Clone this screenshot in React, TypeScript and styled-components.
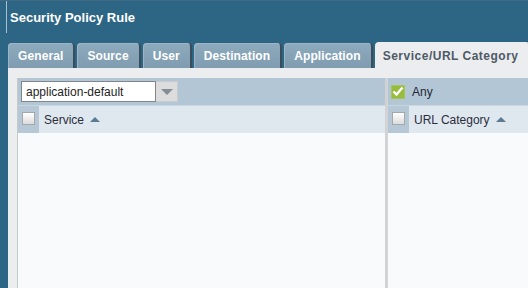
import styled, { createGlobalStyle } from 'styled-components';

const GlobalStyle = createGlobalStyle`
  html, body {
    margin: 0;
    padding: 0;
    background: #2d6685;
  }

  body {
    font-family: "Liberation Sans", Arial, sans-serif;
  }
`;

const tabs = ['General', 'Source', 'User', 'Destination', 'Application', 'Service/URL Category'];

export default function App() {
  return (
    <>
      <GlobalStyle />
      <S.Window>
        <S.TitleBar>
          <S.Title>Security Policy Rule</S.Title>
        </S.TitleBar>
        <S.TabRow>
          {tabs.map((tab) => (
            <S.Tab key={tab} $active={tab === 'Service/URL Category'}>
              {tab}
            </S.Tab>
          ))}
        </S.TabRow>
        <S.Content>
          <S.Panel $width={367} $left>
            <S.PanelBar>
              <S.Select>
                <S.SelectValue>application-default</S.SelectValue>
                <S.SelectButton>
                  <S.DownArrow />
                </S.SelectButton>
              </S.Select>
            </S.PanelBar>
            <S.ColumnHeader>
              <S.CheckCell>
                <S.CheckBox />
              </S.CheckCell>
              <S.ColumnLabel>
                Service
                <S.SortArrow />
              </S.ColumnLabel>
            </S.ColumnHeader>
            <S.Body />
          </S.Panel>
          <S.Panel>
            <S.PanelBar>
              <S.GreenCheck>
                <svg width="12" height="11" viewBox="0 0 12 11">
                  <path d="M1.5 5.5 L4.5 8.5 L10.5 1.5" stroke="#fff" strokeWidth="2.4" fill="none" />
                </svg>
              </S.GreenCheck>
              <S.BarLabel>Any</S.BarLabel>
            </S.PanelBar>
            <S.ColumnHeader>
              <S.CheckCell>
                <S.CheckBox />
              </S.CheckCell>
              <S.ColumnLabel>
                URL Category
                <S.SortArrow />
              </S.ColumnLabel>
            </S.ColumnHeader>
            <S.Body />
          </S.Panel>
        </S.Content>
      </S.Window>
    </>
  );
}

const Window = styled.div`
  width: 528px;
  height: 288px;
  overflow: hidden;

  display: flex;
  flex-direction: column;

  background: #2d6685;
  border-top: 1px solid #3f6a82;
  box-sizing: border-box;
`;

const TitleBar = styled.div`
  height: 32px;

  display: flex;
  align-items: center;

  margin-left: 6px;
  padding-left: 3px;

  border-left: 1px solid #a8c0cf;
`;

const Title = styled.div`
  font-size: 13px;
  font-weight: bold;
  color: #ffffff;
`;

const TabRow = styled.div`
  height: 26px;

  display: flex;
  align-items: flex-end;
  gap: 2px;

  margin-top: 9px;
  padding-left: 8px;
`;

const Tab = styled.div<{ $active?: boolean }>`
  height: ${({ $active }) => ($active ? '26px' : '25px')};

  display: flex;
  align-items: center;
  box-sizing: border-box;

  padding: ${({ $active }) => ($active ? '1px 9px 0 8px' : '1px 10px 0')};

  font-size: 12px;
  font-weight: bold;
  letter-spacing: ${({ $active }) => ($active ? '0.5px' : '0.1px')};
  white-space: nowrap;
  color: ${({ $active }) => ($active ? '#4e5a66' : '#ffffff')};

  background: ${({ $active }) => ($active ? '#ebedef' : 'linear-gradient(#8eaabd, #7f9cb0)')};
  border-radius: 4px 4px 0 0;
  border-right: 2px solid ${({ $active }) => ($active ? '#c9d2d9' : '#3a4d5a')};
  box-shadow: ${({ $active }) => ($active ? 'none' : 'inset 1px 1px 0 #9db5c6')};
`;

const Content = styled.div`
  flex: 1;

  display: flex;

  margin-left: 8px;
  padding: 10px 0 0 9px;

  background: #ebedef;
`;

const Panel = styled.div<{ $width?: number; $left?: boolean }>`
  ${({ $width }) => ($width ? `width: ${$width}px;` : 'flex: 1;')}
  flex-shrink: 0;

  display: flex;
  flex-direction: column;

  border-left: 1px solid ${({ $left }) => ($left ? '#c6cacd' : '#d2d4d6')};
  border-right: ${({ $left }) => ($left ? '2px solid #d0d2d4' : 'none')};
`;

const PanelBar = styled.div`
  height: 27px;

  display: flex;
  align-items: center;
  gap: 7px;

  padding-left: 3px;
  box-sizing: border-box;

  background: #b3c6d5;
`;

const Select = styled.div`
  height: 21px;

  display: flex;
`;

const SelectValue = styled.div`
  width: 135px;

  display: flex;
  align-items: center;
  box-sizing: border-box;

  padding-left: 4px;

  font-size: 12px;
  color: #1e1e1e;

  background: #ffffff;
  border: 1px solid #80868c;
`;

const SelectButton = styled.div`
  width: 21px;

  display: flex;
  align-items: center;
  justify-content: center;

  background: #dcdcdc;
  border: 1px solid #c8ccd0;
  border-left: none;
`;

const DownArrow = styled.div`
  width: 0;
  height: 0;

  border-left: 6px solid transparent;
  border-right: 6px solid transparent;
  border-top: 6px solid #868c93;
`;

const GreenCheck = styled.div`
  width: 14px;
  height: 14px;

  display: flex;
  align-items: center;
  justify-content: center;

  background: #97bd3c;
  border: 1px solid #a8c45f;
  box-sizing: border-box;
`;

const BarLabel = styled.div`
  font-size: 12px;
  color: #23263a;
`;

const ColumnHeader = styled.div`
  height: 27px;

  display: flex;

  background: #dfe8ef;
  border-top: 1px solid #c8d6e1;
`;

const CheckCell = styled.div`
  width: 21px;

  display: flex;
  justify-content: center;
  padding-top: 6px;
  box-sizing: border-box;

  background: #b6c8d6;
`;

const CheckBox = styled.div`
  width: 13px;
  height: 13px;

  background: linear-gradient(#ffffff, #dcdcdc);
  border: 1px solid #a3a8ad;
  box-sizing: border-box;
`;

const ColumnLabel = styled.div`
  display: flex;
  align-items: center;
  gap: 6px;

  padding-left: 5px;

  font-size: 12px;
  color: #2b2d3c;
`;

const SortArrow = styled.div`
  width: 0;
  height: 0;

  border-left: 5px solid transparent;
  border-right: 5px solid transparent;
  border-bottom: 5px solid #5b7b94;
`;

const Body = styled.div`
  flex: 1;

  background: #f8fafb;
`;

const S = {
  Window,
  TitleBar,
  Title,
  TabRow,
  Tab,
  Content,
  Panel,
  PanelBar,
  Select,
  SelectValue,
  SelectButton,
  DownArrow,
  GreenCheck,
  BarLabel,
  ColumnHeader,
  CheckCell,
  CheckBox,
  ColumnLabel,
  SortArrow,
  Body,
};
